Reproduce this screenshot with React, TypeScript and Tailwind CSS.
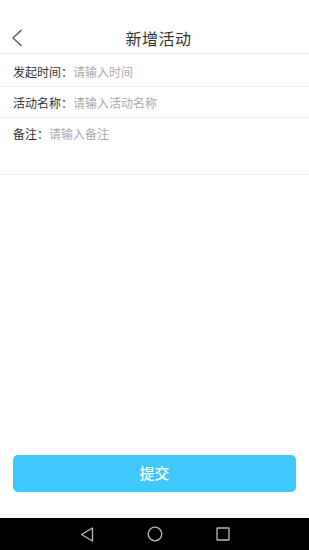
import React from "react";

export default function App() {
  const font = { fontFamily: '"Noto Sans CJK SC", "Noto Sans", sans-serif' };
  return (
    <div className="w-[309px] h-[550px] bg-white flex flex-col" style={font}>
      <div className="h-[22px]" />
      <div className="h-[32px] border-b border-[#e6e6e6] relative flex items-center justify-center pl-[8px]">
        <svg className="absolute left-[11px] top-[7px]" width="12" height="18" viewBox="0 0 12 18">
          <path d="M10.5 1 L2 9 L10.5 17" fill="none" stroke="#555" strokeWidth="1.3" />
        </svg>
        <span className="text-[16px] tracking-[0.5px] text-[#333] leading-none">新增活动</span>
      </div>
      <div className="h-[33px] border-b border-[#eeeeee] flex items-center pl-[13px] pt-[3px] text-[12px]">
        <span className="text-[#333]">发起时间：</span>
        <span className="text-[#aaa]">请输入时间</span>
      </div>
      <div className="h-[31px] border-b border-[#eeeeee] flex items-center pl-[13px] pt-[1px] text-[12px]">
        <span className="text-[#333]">活动名称：</span>
        <span className="text-[#aaa]">请输入活动名称</span>
      </div>
      <div className="h-[57px] border-b border-[#eeeeee] flex items-start pl-[13px] pt-[7px] text-[12px]">
        <span className="text-[#333]">备注：</span>
        <span className="text-[#aaa]">请输入备注</span>
      </div>
      <div className="flex-1" />
      <div className="px-[13px] pb-[26px]">
        <button className="w-full h-[37px] rounded-[5px] bg-[#3ec8fb] text-white text-[15px] font-medium flex items-center justify-center">
          提交
        </button>
      </div>
      <div className="h-[32px] bg-black flex items-center justify-center">
        <div className="flex items-center gap-[53px]">
          <svg width="14" height="15" viewBox="0 0 14 15">
            <path d="M12.5 1 L1.5 7.5 L12.5 14 Z" fill="none" stroke="#bbb" strokeWidth="1.3" strokeLinejoin="round" />
          </svg>
          <svg width="16" height="16" viewBox="0 0 16 16">
            <circle cx="8" cy="8" r="6.8" fill="none" stroke="#bbb" strokeWidth="1.3" />
          </svg>
          <svg width="14" height="14" viewBox="0 0 14 14">
            <rect x="1" y="1" width="12" height="12" fill="none" stroke="#bbb" strokeWidth="1.3" rx="0.5" />
          </svg>
        </div>
      </div>
    </div>
  );
}
